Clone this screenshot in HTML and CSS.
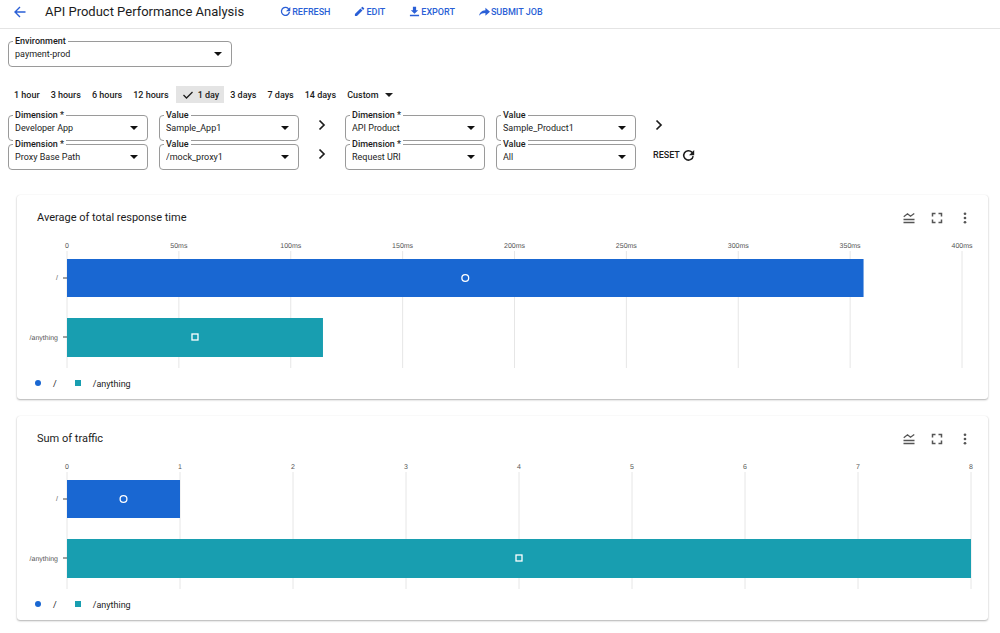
FILE: index.html
```html
<!DOCTYPE html>
<html lang="en">
<head>
<meta charset="utf-8">
<title>API Product Performance Analysis</title>
<link rel="stylesheet" href="styles.css">
</head>
<body>
<svg class="sprite" aria-hidden="true">
  <symbol id="refresh" viewBox="0 0 24 24"><path d="M20.500 13a8.700 8.700 0 1 1-2.300-7.200L20 7.500" fill="none" stroke="currentColor" stroke-width="2.800"/><path d="M22.500 2v9.500H13z"/></symbol>
  <symbol id="chevron" viewBox="0 0 12 12"><path d="M3.500 1.500 8 6l-4.500 4.500" fill="none" stroke="currentColor" stroke-width="1.700"/></symbol>
  <symbol id="caret" viewBox="0 0 8 4"><path d="M0 0h8L4 4z"/></symbol>
  <symbol id="legend-toggle" viewBox="0 0 24 24"><path d="M1 15h22M1 21h22" fill="none" stroke="currentColor" stroke-width="2.600"/><path d="M1.500 9.500 9 3.500l6 5 7.500-5.500" fill="none" stroke="currentColor" stroke-width="2.600"/></symbol>
  <symbol id="fullscreen" viewBox="0 0 24 24"><path d="M3 9V3h6M15 3h6v6M21 15v6h-6M9 21H3v-6" fill="none" stroke="currentColor" stroke-width="3"/></symbol>
  <symbol id="more" viewBox="0 0 24 24"><circle cx="12" cy="3.500" r="2.700"/><circle cx="12" cy="12" r="2.700"/><circle cx="12" cy="20.500" r="2.700"/></symbol>
</svg>

<header class="topbar">
  <a class="back" href="#" aria-label="Back"><svg viewBox="0 0 12 12"><path d="M11.500 6H1.500M6 1 1 6l5 5" fill="none" stroke="currentColor" stroke-width="1.400"/></svg></a>
  <h1 class="title">API Product Performance Analysis</h1>
  <nav class="actions">
    <button class="action"><svg class="action-icon"><use href="#refresh"/></svg>REFRESH</button>
    <button class="action"><svg class="action-icon" viewBox="0 0 24 24"><path d="M2 17.500V22h4.500L18.500 10 14 5.500zM22 6.500a1.300 1.300 0 0 0 0-1.800L19.300 2a1.300 1.300 0 0 0-1.800 0l-2.200 2.200 4.500 4.500z"/></svg>EDIT</button>
    <button class="action"><svg class="action-icon" viewBox="0 0 24 24"><path d="M20 9h-4.500V1.500h-7V9H4l8 8zM2 19v3.500h20V19z"/></svg>EXPORT</button>
    <button class="action"><svg class="action-icon" viewBox="0 0 24 24"><path d="M14 9V4l10 8.500L14 21v-5.500c-6 0-10 1.500-14 6C1.500 15 5 9.500 14 9z"/></svg>SUBMIT JOB</button>
  </nav>
</header>

<main>
  <section class="filters">
    <div class="field field-wide">
      <label class="field-label" for="env">Environment</label>
      <select class="field-select" id="env"><option>payment-prod</option></select>
      <svg class="field-caret"><use href="#caret"/></svg>
    </div>

    <div class="ranges">
      <button class="range">1 hour</button>
      <button class="range">3 hours</button>
      <button class="range">6 hours</button>
      <button class="range">12 hours</button>
      <button class="range range-selected" aria-pressed="true"><svg class="check" viewBox="0 0 10 8"><path d="M.5 4 3.500 7l6-6" fill="none" stroke="currentColor" stroke-width="1.300"/></svg>1 day</button>
      <button class="range">3 days</button>
      <button class="range">7 days</button>
      <button class="range">14 days</button>
      <button class="range">Custom<svg class="range-caret"><use href="#caret"/></svg></button>
    </div>

    <div class="dimensions">
      <div class="dimension-row">
        <div class="field">
          <label class="field-label" for="d1">Dimension *</label>
          <select class="field-select" id="d1"><option>Developer App</option></select>
          <svg class="field-caret"><use href="#caret"/></svg>
        </div>
        <div class="field">
          <label class="field-label" for="v1">Value</label>
          <select class="field-select" id="v1"><option>Sample_App1</option></select>
          <svg class="field-caret"><use href="#caret"/></svg>
        </div>
        <svg class="chevron"><use href="#chevron"/></svg>
        <div class="field">
          <label class="field-label" for="d2">Dimension *</label>
          <select class="field-select" id="d2"><option>API Product</option></select>
          <svg class="field-caret"><use href="#caret"/></svg>
        </div>
        <div class="field">
          <label class="field-label" for="v2">Value</label>
          <select class="field-select" id="v2"><option>Sample_Product1</option></select>
          <svg class="field-caret"><use href="#caret"/></svg>
        </div>
        <svg class="chevron"><use href="#chevron"/></svg>
      </div>
      <div class="dimension-row">
        <div class="field">
          <label class="field-label" for="d3">Dimension *</label>
          <select class="field-select" id="d3"><option>Proxy Base Path</option></select>
          <svg class="field-caret"><use href="#caret"/></svg>
        </div>
        <div class="field">
          <label class="field-label" for="v3">Value</label>
          <select class="field-select" id="v3"><option>/mock_proxy1</option></select>
          <svg class="field-caret"><use href="#caret"/></svg>
        </div>
        <svg class="chevron"><use href="#chevron"/></svg>
        <div class="field">
          <label class="field-label" for="d4">Dimension *</label>
          <select class="field-select" id="d4"><option>Request URI</option></select>
          <svg class="field-caret"><use href="#caret"/></svg>
        </div>
        <div class="field">
          <label class="field-label" for="v4">Value</label>
          <select class="field-select" id="v4"><option>All</option></select>
          <svg class="field-caret"><use href="#caret"/></svg>
        </div>
        <button class="reset">RESET<svg class="reset-icon"><use href="#refresh"/></svg></button>
      </div>
    </div>
  </section>

  <section class="cards">
    <article class="card">
      <div class="card-head">
        <h2 class="card-title">Average of total response time</h2>
        <button class="tool" aria-label="Toggle legend"><svg><use href="#legend-toggle"/></svg></button>
        <button class="tool" aria-label="Full screen"><svg><use href="#fullscreen"/></svg></button>
        <button class="tool" aria-label="More options"><svg><use href="#more"/></svg></button>
      </div>
      <div class="chart chart-time">
        <svg class="plot">
          <g class="grid">
            <line x1="0" x2="0" y1="11" y2="128"/><line x1="12.5%" x2="12.5%" y1="11" y2="128"/><line x1="25%" x2="25%" y1="11" y2="128"/><line x1="37.5%" x2="37.5%" y1="11" y2="128"/><line x1="50%" x2="50%" y1="11" y2="128"/><line x1="62.5%" x2="62.5%" y1="11" y2="128"/><line x1="75%" x2="75%" y1="11" y2="128"/><line x1="87.5%" x2="87.5%" y1="11" y2="128"/><line x1="100%" x2="100%" y1="11" y2="128"/>
          </g>
          <g class="x-labels">
            <text x="0" y="8">0</text><text x="12.5%" y="8">50ms</text><text x="25%" y="8">100ms</text><text x="37.5%" y="8">150ms</text><text x="50%" y="8">200ms</text><text x="62.5%" y="8">250ms</text><text x="75%" y="8">300ms</text><text x="87.5%" y="8">350ms</text><text x="100%" y="8">400ms</text>
          </g>
          <g class="y-labels"><text x="-9" y="40">/</text><text x="-9" y="100">/anything</text></g>
          <g class="ticks"><line x1="-4" x2="0" y1="38" y2="38"/><line x1="-4" x2="0" y1="97" y2="97"/></g>
          <rect class="bar-blue" x="0" y="19" width="89%" height="38"/>
          <rect class="bar-teal" x="0" y="78" width="28.6%" height="39"/>
          <circle class="marker" cx="44.5%" cy="38" r="3.400"/>
          <rect class="marker" x="14.3%" y="94" width="6" height="6" transform="translate(-3 0)"/>
        </svg>
      </div>
      <div class="legend"><span class="dot"></span><span class="series">/</span><span class="square"></span><span class="series">/anything</span></div>
    </article>

    <article class="card">
      <div class="card-head">
        <h2 class="card-title">Sum of traffic</h2>
        <button class="tool" aria-label="Toggle legend"><svg><use href="#legend-toggle"/></svg></button>
        <button class="tool" aria-label="Full screen"><svg><use href="#fullscreen"/></svg></button>
        <button class="tool" aria-label="More options"><svg><use href="#more"/></svg></button>
      </div>
      <div class="chart">
        <svg class="plot">
          <g class="grid">
            <line x1="0" x2="0" y1="11" y2="128"/><line x1="12.5%" x2="12.5%" y1="11" y2="128"/><line x1="25%" x2="25%" y1="11" y2="128"/><line x1="37.5%" x2="37.5%" y1="11" y2="128"/><line x1="50%" x2="50%" y1="11" y2="128"/><line x1="62.5%" x2="62.5%" y1="11" y2="128"/><line x1="75%" x2="75%" y1="11" y2="128"/><line x1="87.5%" x2="87.5%" y1="11" y2="128"/><line x1="100%" x2="100%" y1="11" y2="128"/>
          </g>
          <g class="x-labels">
            <text x="0" y="8">0</text><text x="12.5%" y="8">1</text><text x="25%" y="8">2</text><text x="37.5%" y="8">3</text><text x="50%" y="8">4</text><text x="62.5%" y="8">5</text><text x="75%" y="8">6</text><text x="87.5%" y="8">7</text><text x="100%" y="8">8</text>
          </g>
          <g class="y-labels"><text x="-9" y="40">/</text><text x="-9" y="100">/anything</text></g>
          <g class="ticks"><line x1="-4" x2="0" y1="38" y2="38"/><line x1="-4" x2="0" y1="97" y2="97"/></g>
          <rect class="bar-blue" x="0" y="19" width="12.5%" height="38"/>
          <rect class="bar-teal" x="0" y="78" width="100%" height="39"/>
          <circle class="marker" cx="6.25%" cy="38" r="3.400"/>
          <rect class="marker" x="50%" y="94" width="6" height="6" transform="translate(-3 0)"/>
        </svg>
      </div>
      <div class="legend"><span class="dot"></span><span class="series">/</span><span class="square"></span><span class="series">/anything</span></div>
    </article>
  </section>
</main>
</body>
</html>
```

FILE: styles.css
```css
* { box-sizing: border-box; }
body { margin: 0; background: #fff; color: #1c1c1c; font: 9px/12px Roboto, "Liberation Sans", sans-serif; }
button { border: 0; padding: 0; background: none; color: inherit; font: inherit; cursor: pointer; }
svg { display: block; flex: none; fill: currentColor; }
.sprite { display: none; }

.topbar { display: flex; align-items: center; height: 29px; padding: 0 14px 5px; border-bottom: 1px solid #e4e4e4; }
.back { width: 12px; color: #2a5fd6; }
.back svg { width: 12px; height: 12px; }
.title { margin: 0 0 0 19px; font-size: 13px; line-height: 16px; font-weight: 400; white-space: nowrap; }
.actions { display: flex; gap: 24px; margin-left: 36px; }
.action { display: flex; align-items: center; gap: 1px; color: #2a5fd6; font-weight: 500; white-space: nowrap; }
.action-icon { width: 11px; height: 11px; }

.filters { padding: 12px 8px 0; }
.field { position: relative; width: 140px; }
.field-wide { width: 224px; }
.field-label { position: absolute; top: -6px; left: 5px; padding: 0 2px; background: #fff; line-height: 12px; font-weight: 500; }
.field-select { display: block; width: 100%; height: 26px; padding: 0 24px 0 6px; border: 1px solid #9a9a9a; border-radius: 4px; background: none; appearance: none; color: inherit; font: inherit; }
.field-caret { position: absolute; top: 11px; right: 10px; width: 8px; height: 4px; color: #111; pointer-events: none; }

.ranges { display: flex; gap: 1px; margin: 19px 0 12px 1px; }
.range { display: flex; align-items: center; height: 17px; padding: 0 5px; font-weight: 500; white-space: nowrap; }
.range-selected { margin-left: 1px; background: #e4e4e4; }
.check { width: 10px; height: 8px; margin: 0 5px 0 2px; }
.range-caret { width: 8px; height: 4px; margin-left: 7px; }

.dimensions { display: grid; gap: 3px; }
.dimension-row { display: flex; align-items: flex-start; }
.field + .field { margin-left: 11px; }
.chevron { width: 12px; height: 12px; margin: 4px 17px 0; }
.reset { display: flex; align-items: center; gap: 2px; height: 22px; margin-left: 17px; font-weight: 500; }
.reset-icon { width: 13px; height: 13px; }

.cards { display: grid; gap: 17px; padding: 25px 12px 12px 17px; }
.card { padding: 15px 17px 9px 20px; border-radius: 3px; background: #fff; box-shadow: 0 1px 2px rgba(0, 0, 0, .3), 0 0 1px rgba(0, 0, 0, .1); }
.card-head { display: flex; align-items: center; gap: 16px; height: 15px; }
.card-title { flex: 1; margin: 0; font-size: 11px; line-height: 15px; font-weight: 400; }
.tool { color: #555; }
.tool svg { width: 12px; height: 12px; }

.chart { margin-top: 15px; padding-left: 30px; }
.chart-time { padding-right: 9px; }
.plot { width: 100%; height: 128px; overflow: visible; }
.grid line { stroke: #e6e6e6; }
.ticks line { stroke: #444; }
.x-labels, .y-labels { fill: #555; font: 7px "Liberation Sans", sans-serif; text-rendering: geometricPrecision; }
.x-labels { text-anchor: middle; }
.y-labels { text-anchor: end; }
.bar-blue { fill: #1967d2; }
.bar-teal { fill: #189eb0; }
.marker { fill: none; stroke: #fff; stroke-width: 1.3; }

.legend { display: flex; align-items: center; height: 12px; margin: 10px 0 0 -2px; }
.dot, .square { width: 6px; height: 6px; margin-bottom: 2px; }
.dot { border-radius: 50%; background: #1967d2; }
.square { background: #189eb0; margin-left: 18px; }
.series { margin-left: 12px; }
```
